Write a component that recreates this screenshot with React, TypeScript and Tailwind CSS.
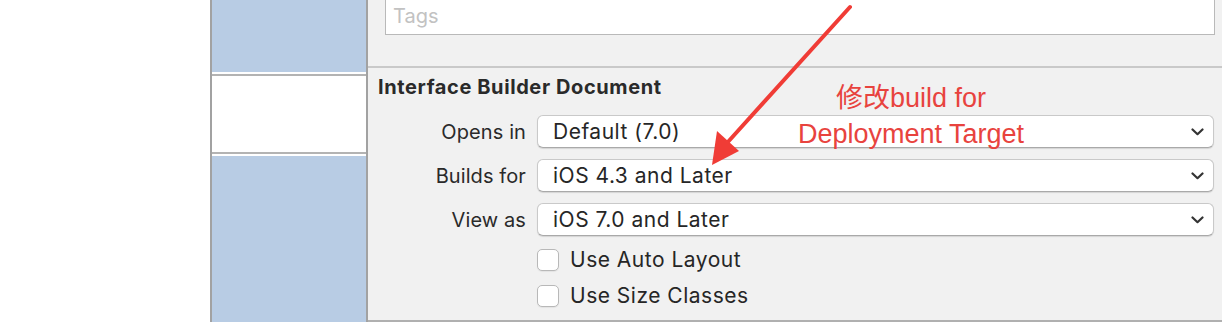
import { ReactElement } from "react"

const Chevron = (): ReactElement => (
    <svg width="13" height="8" viewBox="0 0 13 8" className="shrink-0">
        <path d="M1.5 1.5 L6.5 6.2 L11.5 1.5" fill="none" stroke="#333" strokeWidth="2.2" strokeLinecap="round" strokeLinejoin="round" />
    </svg>
)

const SelectRow = ({ label, value }: { label: string, value: string }): ReactElement => {
    return (
        <div className="flex items-center h-[33px]">
            <div className="w-[159px] pr-[1px] text-right text-[20px] text-[#2a2a2a] tracking-[0.1px]">{label}</div>
            <div className="ml-[10px] w-[677px] h-[33px] flex items-center justify-between pl-[15px] pr-[9px] bg-white border border-[#c9c9c9] border-b-[#a9a9a9] rounded-[6px] shadow-[0_1px_1px_rgba(0,0,0,0.12)]">
                <span className="text-[21px] text-[#262626] tracking-[0.5px]">{value}</span>
                <Chevron />
            </div>
        </div>
    )
}

const CheckRow = ({ label }: { label: string }): ReactElement => (
    <div className="flex items-center h-[23px] pl-[169px]">
        <div className="w-[22px] h-[22px] bg-white border border-[#b8b8b8] rounded-[5px] shadow-[0_1px_1px_rgba(0,0,0,0.06)]" />
        <span className="ml-[11px] text-[21px] text-[#262626] tracking-[0.5px]">{label}</span>
    </div>
)

const App = () => {
    return (
        <div
            className="relative w-[1222px] h-[322px] flex bg-white overflow-hidden"
            style={{ fontFamily: "Inter, 'Liberation Sans', sans-serif" }}
        >
            <div className="w-[210px]" />

            <div className="w-[158px] flex flex-col border-x-2 border-[#a2a2a2]">
                <div className="h-[72px] bg-[#b8cce4]" />
                <div className="h-[2px] bg-white" />
                <div className="h-[2px] bg-[#b3b3b3]" />
                <div className="h-[76px] bg-white" />
                <div className="h-[2px] bg-[#b3b3b3]" />
                <div className="h-[2px] bg-white" />
                <div className="flex-1 bg-[#b8cce4]" />
            </div>

            <div className="flex-1 flex flex-col bg-[#f1f1f1] border-b-2 border-[#b0b0b0]">
                <div className="h-[66px] pl-[17px] pr-[7px]">
                    <div className="h-[35px] flex items-center pl-[7px] pb-[3px] bg-white border-x border-b border-[#b9b9b9]">
                        <span className="text-[20px] text-[#c2c2c2]">Tags</span>
                    </div>
                </div>

                <div className="border-t-2 border-[#c9c9c9] pt-[7px]">
                    <h3 className="pl-[10px] h-[24px] leading-[24px] text-[20px] font-bold text-[#2a2a2a] tracking-[0.6px]">
                        Interface Builder Document
                    </h3>

                    <div className="mt-[16px] flex flex-col gap-[11px]">
                        <SelectRow label="Opens in" value="Default (7.0)" />
                        <SelectRow label="Builds for" value="iOS 4.3 and Later" />
                        <SelectRow label="View as" value="iOS 7.0 and Later" />
                    </div>

                    <div className="mt-[12px] flex flex-col gap-[13px]">
                        <CheckRow label="Use Auto Layout" />
                        <CheckRow label="Use Size Classes" />
                    </div>
                </div>
            </div>

            {/* red annotation drawn over the screenshot */}
            <svg className="absolute left-0 top-0 pointer-events-none" width="1222" height="322">
                <line x1="850" y1="7" x2="727" y2="143" stroke="#f03c36" strokeWidth="4" strokeLinecap="round" />
                <polygon points="712,165 717,131 739,151" fill="#f03c36" />
            </svg>
            <div
                className="absolute left-[780px] top-[80px] w-[262px] text-center text-[27px] leading-[36px] text-[#e8433e]"
                style={{ fontFamily: "'Liberation Sans', 'Noto Sans CJK SC', sans-serif" }}
            >
                修改build for<br />Deployment Target
            </div>
        </div>
    )
}

export default App
